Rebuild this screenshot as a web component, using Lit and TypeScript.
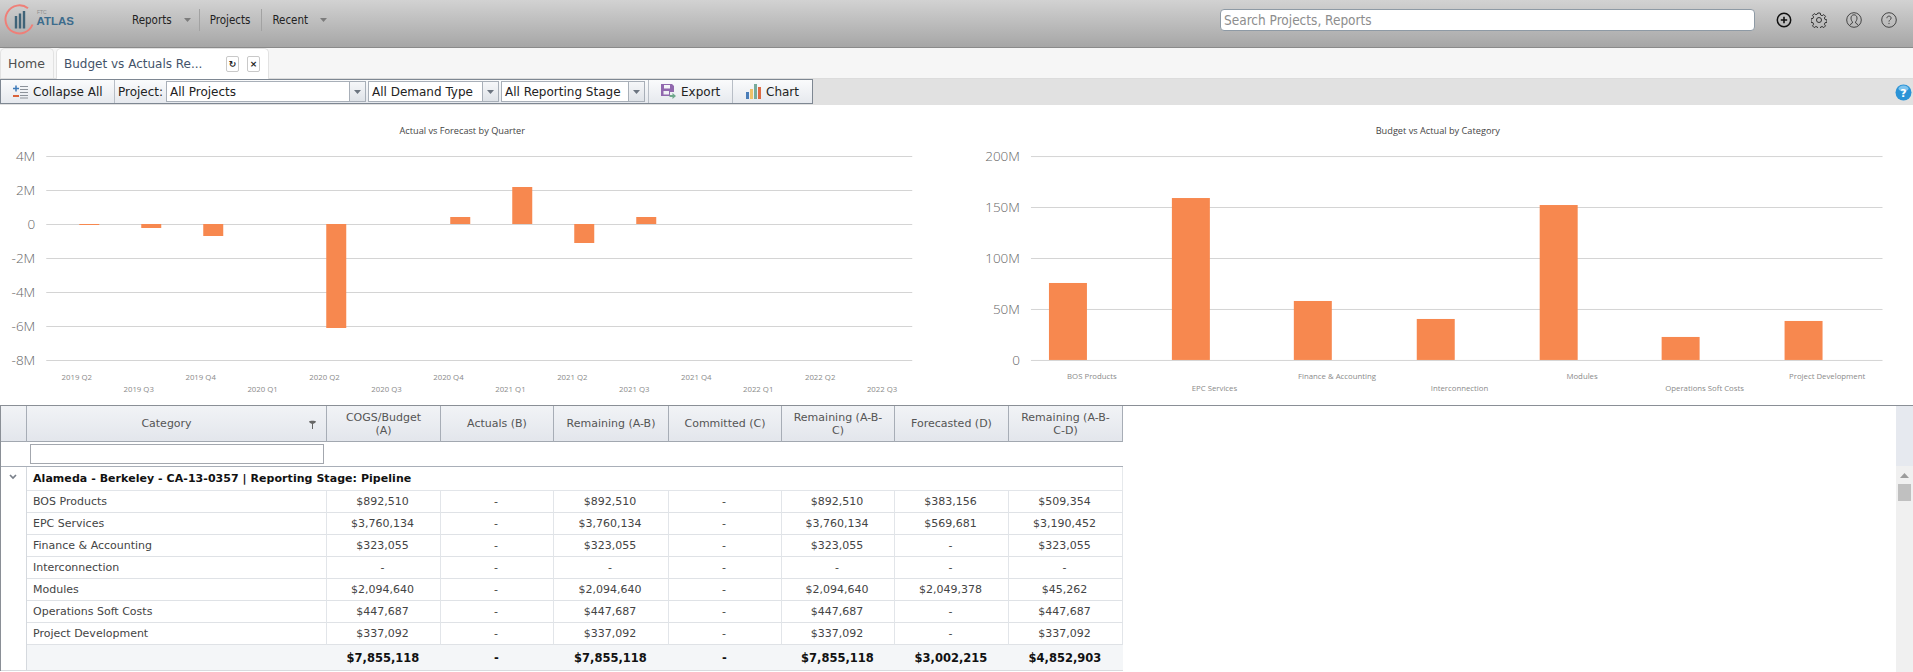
import { LitElement, html, css, svg } from "lit";
import { customElement, property } from "lit/decorators.js";

type Bar = { x: number; top: number; bottom: number };
type Tick = { label: string; y: number };
type XLabel = { label: string; x: number; y: number };

const H = 300;
const OFFSET_Y = 105;

@customElement("bar-chart")
class BarChart extends LitElement {
  @property({ type: Object }) spec: any = null;
  static styles = css`
    :host { display: block; flex: 1 1 0; min-width: 0; }
    svg { display: block; width: 100%; height: 300px; }
    .title { font: 9.2px "Open Sans", sans-serif; fill: #444; text-anchor: middle; }
    .tick { font: 300 13.5px "Open Sans", sans-serif; fill: #666; text-anchor: end; }
    .xl { font: 400 7.8px "Open Sans", sans-serif; fill: #8a8a8a; text-anchor: middle; }
    .grid { stroke: #d4d4d4; stroke-width: 1; }
    .bar { fill: #f7884f; }
  `;
  render() {
    const s = this.spec;
    if (!s) return html``;
    const ox = s.ox as number;
    return html`<svg viewBox="0 0 ${s.w} ${H}" width=${s.w} height=${H}>
      ${svg`<text class="title" x=${s.titleX - ox} y=${134 - OFFSET_Y}>${s.title}</text>`}
      ${(s.ticks as Tick[]).map(
        (t) => svg`
          <line class="grid" x1=${s.x0 - ox} x2=${s.x1 - ox} y1=${t.y - OFFSET_Y + 0.5} y2=${t.y - OFFSET_Y + 0.5}></line>
          <text class="tick" x=${s.tickX - ox} y=${t.y - OFFSET_Y + 5}>${t.label}</text>`
      )}
      ${(s.bars as Bar[]).map(
        (b) => svg`<rect class="bar" x=${b.x - ox} y=${b.top - OFFSET_Y} width=${s.barW} height=${b.bottom - b.top}></rect>`
      )}
      ${(s.labels as XLabel[]).map(
        (l) => svg`<text class="xl" x=${l.x - ox} y=${l.y - OFFSET_Y}>${l.label}</text>`
      )}
    </svg>`;
  }
}

const quarters = ["2019 Q2","2019 Q3","2019 Q4","2020 Q1","2020 Q2","2020 Q3","2020 Q4","2021 Q1","2021 Q2","2021 Q3","2021 Q4","2022 Q1","2022 Q2","2022 Q3"];

const leftSpec = {
  ox: 0, w: 956, title: "Actual vs Forecast by Quarter", titleX: 462, x0: 46, x1: 912, tickX: 35, barW: 20,
  ticks: [["4M",156],["2M",190],["0",224],["-2M",258],["-4M",292],["-6M",326],["-8M",360]].map(([label,y]) => ({label,y})),
  bars: [
    {x:79,top:224,bottom:225},{x:141,top:224,bottom:228},{x:203,top:224,bottom:236},
    {x:326,top:224,bottom:328},{x:450,top:217,bottom:224},{x:512,top:187,bottom:224},
    {x:574,top:224,bottom:243},{x:636,top:217,bottom:224},
  ],
  labels: quarters.map((q,i) => ({label:q, x:76.5+i*61.95, y:i%2?391.5:379.5})),
};

const cats = ["BOS Products","EPC Services","Finance & Accounting","Interconnection","Modules","Operations Soft Costs","Project Development"];
const rightSpec = {
  ox: 956, w: 957, title: "Budget vs Actual by Category", titleX: 1437, x0: 1030, x1: 1882, tickX: 1019, barW: 38,
  ticks: [["200M",156],["150M",207],["100M",258],["50M",309],["0",360]].map(([label,y]) => ({label,y})),
  bars: [[1048,283],[1171,198],[1293,301],[1416,319],[1539,205],[1661,337],[1784,321]].map(([x,top]) => ({x,top,bottom:360})),
  labels: cats.map((c,i) => ({label:c, x:1091+i*122.6, y:i%2?391.5:379.5})),
};

const headers = ["COGS/Budget (A)","Actuals (B)","Remaining (A-B)","Committed (C)","Remaining (A-B-C)","Forecasted (D)","Remaining (A-B-C-D)"];
const rows: string[][] = [
  ["BOS Products","$892,510","-","$892,510","-","$892,510","$383,156","$509,354"],
  ["EPC Services","$3,760,134","-","$3,760,134","-","$3,760,134","$569,681","$3,190,452"],
  ["Finance & Accounting","$323,055","-","$323,055","-","$323,055","-","$323,055"],
  ["Interconnection","-","-","-","-","-","-","-"],
  ["Modules","$2,094,640","-","$2,094,640","-","$2,094,640","$2,049,378","$45,262"],
  ["Operations Soft Costs","$447,687","-","$447,687","-","$447,687","-","$447,687"],
  ["Project Development","$337,092","-","$337,092","-","$337,092","-","$337,092"],
];
const totals = ["$7,855,118","-","$7,855,118","-","$7,855,118","$3,002,215","$4,852,903"];

const caret = html`<svg class="caret" width="7" height="4" viewBox="0 0 7 4"><path d="M0 0h7L3.500 4z" fill="currentColor"/></svg>`;

@customElement("app-root")
export class AppRoot extends LitElement {
  static styles = css`
    :host { display: block; width: 1913px; height: 672px; overflow: hidden; background: #fff; font: 11px "DejaVu Sans", sans-serif; color: #333; }
    .top { height: 48px; box-sizing: border-box; padding-bottom: 7px; background: linear-gradient(#d2d2d2, #a6a6a6); border-bottom: 1px solid #8a8a8a; display: flex; align-items: center; }
    .logo { width: 132px; height: 38px; flex: none; }
    .logo svg { display: block; }
    .menu { display: flex; align-items: center; height: 22px; }
    .menu span { font: 11.500px "DejaVu Sans Condensed", "DejaVu Sans", sans-serif; color: #222; }
    .menu .caret { color: #7c7c7c; margin-left: 12px; margin-right: 8px; }
    .sep { width: 1px; height: 22px; background: #a2a2a2; margin-right: 10px; }
    .menu .plain { margin-right: 11px; }
    .search { margin-left: auto; width: 535px; height: 22px; box-sizing: border-box; background: #fff; border: 1px solid #8e9aa5; border-radius: 4px; padding-left: 3px; font: 13.500px "DejaVu Sans Condensed", sans-serif; color: #8d8d8d; display: flex; align-items: center; }
    .icons { display: flex; gap: 19px; margin: 0 16px 0 21px; align-items: center; }
    .icons svg { display: block; }
    .tabs { height: 31px; box-sizing: border-box; background: #f6f6f6; border-bottom: 1px solid #dcdcdc; display: flex; align-items: flex-end; }
    .tab { height: 30px; box-sizing: border-box; font: 12.500px "DejaVu Sans", sans-serif; color: #4f4f4f; display: flex; align-items: center; border: 1px solid #e2e2e2; border-bottom: 0; border-radius: 5px 5px 0 0; }
    .tab.home { width: 54px; padding-left: 7px; background: #f6f6f6; }
    .tab.active { width: 213px; margin-left: 2px; padding-left: 7px; background: #fff; height: 31px; margin-bottom: -1px; color: #43536a; font-size: 12px; }
    .tab .t { flex: 1; white-space: nowrap; }
    .tbtn { width: 11px; height: 14px; border: 1px solid #c9c9c9; border-radius: 2px; margin-right: 8px; font: bold 9px "DejaVu Sans", sans-serif; color: #222; display: flex; align-items: center; justify-content: center; }
    .toolbar { height: 26px; box-sizing: border-box; background: #e1e1e1; display: flex; align-items: flex-start; }
    .tb { height: 25px; box-sizing: border-box; display: flex; align-items: stretch; border: 1px solid #7e8792; background: linear-gradient(#fafbfc, #e6e9ee); font: 12px "DejaVu Sans", sans-serif; color: #222; }
    .btn { display: flex; align-items: center; gap: 5px; box-sizing: border-box; border-right: 1px solid #b8bec6; }
    .btn.collapse { width: 114px; padding-left: 12px; }
    .btn.export { width: 85px; padding-left: 12px; gap: 5px; margin-left: 1px; border-left: 1px solid #b8bec6; }
    .btn.chart { width: 79px; padding-left: 13px; border-right: 0; }
    .lbl { display: flex; align-items: center; width: 51px; box-sizing: border-box; padding-left: 3px; }
    .sel { display: flex; margin: 1px 2px 0 0; border: 1px solid #a8afb8; background: #fff; box-sizing: border-box; height: 21px; }
    .sel .v { flex: 1; padding-left: 3px; display: flex; align-items: center; box-sizing: border-box; white-space: nowrap; overflow: hidden; }
    .sel .a { flex: none; width: 15px; border-left: 1px solid #a8afb8; background: linear-gradient(#f6f7f9, #dfe3e8); display: flex; align-items: center; justify-content: center; color: #6c7580; }
    .sel .caret { display: block; }
    .spacer { flex: 1; }
    .help { margin: 5px 1px 0 0; display: block; }
    .charts { display: flex; height: 300px; }
    .grid { display: flex; border-top: 1px solid #8a8f96; height: 267px; box-sizing: border-box; }
    .tablewrap { flex: 1; min-width: 0; }
    table { border-collapse: separate; border-spacing: 0; table-layout: fixed; width: 1123px; border-left: 1px solid #8a8f96; }
    th, td { padding: 0; box-sizing: border-box; font-weight: normal; }
    thead th { height: 36px; background: linear-gradient(#f1f3f6, #e3e6ec); border-right: 1px solid #a7adb6; border-bottom: 1px solid #a2a8b0; color: #555; line-height: 13px; text-align: center; padding: 0 11px; position: relative; }
    thead th.ind { padding: 0; }
    thead th.catcol { padding-right: 31px; }
    .fil { position: absolute; right: 10px; top: 14px; display: block; }
    .filter td { height: 25px; border-bottom: 1px solid #a9afb8; padding: 0 3px; vertical-align: middle; }
    .filter .box { display: block; height: 20px; box-sizing: border-box; border: 1px solid #a3a7ae; background: #fff; width: 294px; }
    .group td { height: 23px; font-weight: bold; color: #111; font-size: 11px; letter-spacing: 0.05px; white-space: nowrap; overflow: visible; padding-left: 6px; }
    .group td.ind { padding: 0; border-right: 0; text-align: center; color: #7a808a; vertical-align: top; }
    .group td.rest { border-right: 1px solid #e6e9ec; padding: 0; }
    .group .chev { display: block; margin: 7px 0 0 8px; }
    .row td { height: 22px; border-right: 1px solid #e2e5e9; border-bottom: 1px solid #dfe2e6; text-align: center; color: #444; padding-right: 2px; }
    .row td.cat { text-align: left; padding: 0 0 0 6px; border-left: 0; }
    .row td:first-child { padding: 0; }
    td.ind { border-right: 1px solid #d5d9de !important; border-bottom: 0 !important; background: #fff; }
    .row td { border-top: 0; }
    .group + .row td:not(.ind) { border-top: 1px solid #e2e5e9; height: 23px; }
    .foot td { height: 26px; background: #f4f6f8; border-bottom: 1px solid #d8dbdf; text-align: center; font-weight: bold; color: #111; font-size: 11.500px; padding-right: 2px; }
    .foot td.ind { background: #fff; border-bottom: 1px solid #d8dbdf !important; padding: 0; }
    .scroll { width: 17px; flex: none; display: flex; flex-direction: column; background: #f0f0f0; align-items: center; }
    .scroll .hd { height: 60px; width: 17px; background: #e6e9ef; flex: none; }
    .scroll .up { margin-top: 7px; display: block; }
    .scroll .thumb { width: 13px; height: 17px; background: #c0c0c0; margin-top: 6px; }
  `;
  render() {
    const widths = [26, 300, 114, 113, 115, 113, 113, 114, 114];
    return html`
      <div class="top">
        <div class="logo">
          <svg width="80" height="38" viewBox="0 0 80 38">
            <path d="M28 7.300A14 14 0 1 0 32.500 23.500" fill="none" stroke="#ef7f78" stroke-width="2"/>
            <path d="M16 15v12.500M20 12.500v15M24 10v17.500" stroke="#3f6378" stroke-width="2.400"/>
            <text x="37" y="12.500" font-family="Liberation Sans" font-size="5" fill="#8c8c8c">FTC</text>
            <text x="36.500" y="24" font-family="Liberation Sans" font-weight="700" font-size="11.500" fill="#3d6c8c">ATLAS</text>
          </svg>
        </div>
        <div class="menu">
          <span>Reports</span>${caret}<div class="sep"></div>
          <span class="plain">Projects</span><div class="sep"></div>
          <span>Recent</span>${caret}
        </div>
        <div class="search">Search Projects, Reports</div>
        <div class="icons">
          <svg width="16" height="16" viewBox="0 0 16 16"><circle cx="8" cy="8" r="6.700" fill="none" stroke="#111" stroke-width="1.500"/><path d="M8 4.800v6.400M4.800 8h6.400" stroke="#111" stroke-width="1.600"/></svg>
          <svg width="16" height="16" viewBox="0 0 16 16" fill="none" stroke="#333" stroke-width="1"><circle cx="8" cy="8" r="2.500"/><path d="M6.800 1h2.400l.4 2 1.500.7 1.700-1.100 1.700 1.700-1.100 1.700.6 1.500 2 .4v2.400l-2 .4-.6 1.500 1.100 1.700-1.700 1.700-1.700-1.100-1.500.6-.4 2H6.800l-.4-2-1.500-.6-1.700 1.100-1.700-1.700 1.100-1.700-.6-1.500-2-.4V6.800l2-.4.6-1.500L1.500 3.300 3.200 1.600l1.700 1.100 1.500-.7z"/></svg>
          <svg width="16" height="16" viewBox="0 0 16 16" fill="none" stroke="#444" stroke-width="1"><circle cx="8" cy="8" r="7.300"/><path d="M8 2.800c-1.900 0-3 1.400-3 3.300 0 1.600.7 3 1.400 3.700v1.200l-2.500 1.800M8 2.800c1.900 0 3 1.400 3 3.300 0 1.600-.7 3-1.400 3.700v1.200l2.500 1.800"/></svg>
          <svg width="16" height="16" viewBox="0 0 16 16" fill="none" stroke="#444" stroke-width="1"><circle cx="8" cy="8" r="7.300"/><path d="M5.900 6.200c0-1.300 1-2.100 2.100-2.100s2.100.8 2.100 2c0 1.700-2.100 1.700-2.100 3.500M8 10.900v1.200"/></svg>
        </div>
      </div>

      <div class="tabs">
        <div class="tab home">Home</div>
        <div class="tab active">
          <span class="t">Budget vs Actuals Re...</span>
          <span class="tbtn">↻</span><span class="tbtn">×</span>
        </div>
      </div>

      <div class="toolbar">
        <div class="tb">
          <div class="btn collapse">
            <svg width="15" height="14" viewBox="0 0 15 14"><path d="M0 3.500h6M3 .5v6" stroke="#3d7ab8" stroke-width="1.500"/><path d="M0 11h6" stroke="#d9623b" stroke-width="2"/><path d="M7 1.500h8M7 4.500h8M7 7.500h8M7 10.500h8M7 13h8" stroke="#8d939a"/></svg>
            Collapse All
          </div>
          <div class="lbl">Project:</div>
          ${this.sel("All Projects", 200)}
          ${this.sel("All Demand Type", 131)}
          ${this.sel("All Reporting Stage", 144)}
          <div class="btn export">
            <svg width="15" height="15" viewBox="0 0 15 15"><path fill-rule="evenodd" d="M0 0h11l2 2v6H9v4H0zM3 1v3.500h6V1zM2.500 7v3.500H8V7z" fill="#9168ae"/><path d="M8.500 11h3V9l3.500 3-3.500 3v-2h-3z" fill="#6fa88c"/></svg>
            Export
          </div>
          <div class="btn chart">
            <svg width="15" height="15" viewBox="0 0 15 15"><rect x="0" y="8" width="3" height="7" fill="#4a7db8"/><rect x="4" y="5" width="3" height="10" fill="#eec26a"/><rect x="8" y="0" width="3" height="15" fill="#78ab9b"/><rect x="12" y="3" width="3" height="12" fill="#dd6a43"/></svg>
            Chart
          </div>
        </div>
        <div class="spacer"></div>
        <svg class="help" width="17" height="17" viewBox="0 0 17 17"><circle cx="8.500" cy="8.500" r="8" fill="#2b93d6"/><ellipse cx="8.500" cy="4.500" rx="5" ry="3" fill="#7fc4ee"/><text x="8.500" y="13" text-anchor="middle" font-family="DejaVu Sans" font-weight="700" font-size="11" fill="#fff">?</text></svg>
      </div>

      <div class="charts">
        <bar-chart .spec=${leftSpec}></bar-chart>
        <bar-chart .spec=${rightSpec}></bar-chart>
      </div>

      <div class="grid">
        <div class="tablewrap">
          <table>
            <colgroup>${widths.map((w) => html`<col style="width:${w}px" />`)}</colgroup>
            <thead>
              <tr>
                <th class="ind"></th>
                <th class="catcol">Category
                  <svg class="fil" width="7" height="9" viewBox="0 0 7 9"><path d="M0 1.500C0 .5 7 .5 7 1.500S5 3.500 4 4v5H3V4C2 3.500 0 2.500 0 1.500z" fill="#666"/></svg>
                </th>
                ${headers.map((h) => html`<th>${h}</th>`)}
              </tr>
            </thead>
            <tbody>
              <tr class="filter"><td></td><td><span class="box"></span></td><td colspan="7"></td></tr>
              <tr class="group">
                <td class="ind"><svg class="chev" width="8" height="6" viewBox="0 0 8 6"><path d="M1 1l3 3 3-3" fill="none" stroke="#7a808a" stroke-width="1.700"/></svg></td>
                <td colspan="7">Alameda - Berkeley - CA-13-0357 | Reporting Stage: Pipeline</td>
                <td class="rest"></td>
              </tr>
              ${rows.map(
                (r) => html`<tr class="row"><td class="ind"></td>${r.map(
                  (c, i) => html`<td class=${i === 0 ? "cat" : ""}>${c}</td>`
                )}</tr>`
              )}
              <tr class="foot"><td class="ind"></td><td></td>${totals.map((t) => html`<td>${t}</td>`)}</tr>
            </tbody>
          </table>
        </div>
        <div class="scroll">
          <div class="hd"></div>
          <svg class="up" width="9" height="5" viewBox="0 0 9 5"><path d="M4.500 0L9 5H0z" fill="#9c9c9c"/></svg>
          <div class="thumb"></div>
        </div>
      </div>
    `;
  }
  sel(v: string, w: number) {
    return html`<div class="sel" style="width:${w}px"><div class="v">${v}</div><div class="a">${caret}</div></div>`;
  }
}
void BarChart;
